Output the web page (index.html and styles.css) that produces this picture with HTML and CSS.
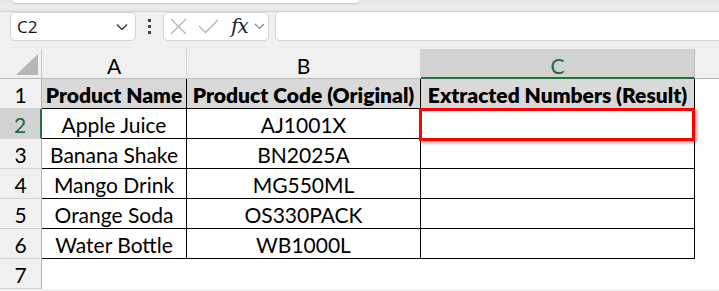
FILE: index.html
```html
<!DOCTYPE html>
<html>
<head>
<meta charset="utf-8">
<link rel="stylesheet" href="styles.css">
</head>
<body>
<div class="topstrip"><div class="ribbon"></div></div>
<div class="fbar">
  <div class="namebox"><span class="ref">C2</span>
    <svg class="chev" width="12" height="8" viewBox="0 0 12 8"><path d="M1 1.5 L6 6.5 L11 1.5" fill="none" stroke="#333" stroke-width="1.3"/></svg>
  </div>
  <div class="dots"><i></i><i></i><i></i></div>
  <div class="fxbox">
    <svg width="17" height="17" viewBox="0 0 17 17" class="xicon"><path d="M1 1 L16 16 M16 1 L1 16" stroke="#b4b4b4" stroke-width="1.3" fill="none"/></svg>
    <svg width="21" height="15" viewBox="0 0 21 15" class="chk"><path d="M1 7 L7.5 13.5 L20 1" stroke="#b4b4b4" stroke-width="1.3" fill="none"/></svg>
    <span class="fx">fx</span>
    <svg class="chev2" width="11" height="7" viewBox="0 0 11 7"><path d="M1 1 L5.5 5.5 L10 1" fill="none" stroke="#888" stroke-width="1.2"/></svg>
  </div>
  <div class="input"></div>
</div>
<div class="sheet">
  <div class="corner"><span class="tri"></span></div>
  <div class="ch">A</div>
  <div class="ch">B</div>
  <div class="ch sel">C</div>
  <div class="ch rest"></div>

  <div class="rh">1</div>
  <div class="c hd">Product Name</div>
  <div class="c hd">Product Code (Original)</div>
  <div class="c hd">Extracted Numbers (Result)</div>
  <div class="e"></div>

  <div class="rh sel">2</div>
  <div class="c">Apple Juice</div>
  <div class="c">AJ1001X</div>
  <div class="c active"><span class="redbox"></span></div>
  <div class="e"></div>

  <div class="rh">3</div>
  <div class="c">Banana Shake</div>
  <div class="c">BN2025A</div>
  <div class="c"></div>
  <div class="e"></div>

  <div class="rh">4</div>
  <div class="c">Mango Drink</div>
  <div class="c">MG550ML</div>
  <div class="c"></div>
  <div class="e"></div>

  <div class="rh">5</div>
  <div class="c">Orange Soda</div>
  <div class="c">OS330PACK</div>
  <div class="c"></div>
  <div class="e"></div>

  <div class="rh">6</div>
  <div class="c">Water Bottle</div>
  <div class="c">WB1000L</div>
  <div class="c"></div>
  <div class="e"></div>

  <div class="rh">7</div>
  <div class="e"></div>
  <div class="e"></div>
  <div class="e"></div>
  <div class="e"></div>
</div>
</body>
</html>
```
FILE: styles.css
```css
* { box-sizing: border-box; }
html, body { margin: 0; padding: 0; }
body {
  width: 719px;
  height: 291px;
  overflow: hidden;
  background: #f0f0f0;
  font-family: "Lato", "Liberation Sans", sans-serif;
}
.topstrip {
  height: 12px;
  background: linear-gradient(#e6e6e6, #eeeeee 70%, #e2e2e2);
  border-bottom: 1px solid #d6d6d6;
  position: relative;
}
.ribbon {
  margin-left: 13px;
  width: 346px;
  height: 3px;
  background: #fff;
  border-radius: 0 0 5px 5px;
  box-shadow: 0 1px 2px rgba(0,0,0,0.18);
}
.fbar {
  display: flex;
  align-items: stretch;
  height: 30px;
  margin-top: -1px;
  padding-left: 10px;
}
.namebox {
  width: 126px;
  margin-top: 1px;
  height: 29px;
  background: #fff;
  border: 1px solid #d3d3d3;
  border-radius: 5px;
  display: flex;
  align-items: center;
  justify-content: space-between;
  padding: 0 7px 0 6px;
  font-family: "Open Sans", "Liberation Sans", sans-serif;
  font-size: 17px;
  color: #111;
}
.dots {
  width: 27px;
  display: flex;
  flex-direction: column;
  align-items: center;
  justify-content: center;
  gap: 3px;
}
.dots i { display: block; width: 3px; height: 3px; background: #444; }
.fxbox {
  width: 106px;
  margin-top: 1px;
  height: 29px;
  background: #fff;
  border: 1px solid #d3d3d3;
  border-radius: 5px;
  display: flex;
  align-items: center;
  padding-left: 6px;
}
.xicon { margin-right: 11px; }
.chk { margin-right: 12px; }
.fx {
  font-family: "DejaVu Serif", "Liberation Serif", serif;
  font-style: italic;
  font-size: 20px;
  color: #222;
  letter-spacing: -1px;
  line-height: 1;
  margin-bottom: 2px;
}
.chev2 { margin-left: 6px; }
.input {
  flex: 1;
  margin-left: 6px;
  margin-right: -6px;
  background: #fff;
  border: 1px solid #d3d3d3;
  border-radius: 5px;
}
.sheet {
  margin-top: 8px;
  display: grid;
  grid-template-columns: 42px 145px 234px 274px 1fr;
  grid-template-rows: 30px repeat(7, 30px);
  background: #fff;
  font-size: 21px;
  color: #000;
}
.corner {
  background: #f0f0f0;
  border-right: 1px solid #c8c8c8;
  border-bottom: 1px solid #b8b8b8;
  position: relative;
}
.tri {
  position: absolute;
  right: 3px;
  bottom: 3px;
  width: 0; height: 0;
  border-left: 22px solid transparent;
  border-bottom: 21px solid #b6b6b6;
}
.ch {
  background: #f0f0f0;
  border-right: 1px solid #d4d4d4;
  border-bottom: 1px solid #b8b8b8;
  display: flex;
  align-items: center;
  justify-content: center;
  padding-top: 3px;
}
.ch.sel {
  background: #d2d2d2;
  color: #1d6b3f;
  border-bottom: 2px solid #1f7244;
  border-right: 1px solid #bdbdbd;
  padding-top: 4px;
}
.ch.rest { border-right: none; }
.rh {
  background: #f0f0f0;
  border-right: 1px solid #b4b4b4;
  border-bottom: 1px solid #d4d4d4;
  display: flex;
  align-items: center;
  justify-content: center;
  padding-top: 2px;
}
.rh.sel {
  background: #d2d2d2;
  color: #1d6b3f;
  border-right: 2px solid #1f7244;
}
.c {
  border-right: 1px solid #000;
  border-bottom: 1px solid #000;
  display: flex;
  align-items: center;
  justify-content: center;
  padding-top: 2px;
  white-space: nowrap;
}
.c.hd {
  background: #d9d9d9;
  font-weight: 800;
}
.e { background: #fff; }
.active { position: relative; }
.redbox {
  position: absolute;
  left: -2px;
  top: -1px;
  right: -1px;
  bottom: -3px;
  border: 3px solid #ff0000;
  box-shadow: 2px 2px 3px rgba(0,0,0,0.35);
}
```
